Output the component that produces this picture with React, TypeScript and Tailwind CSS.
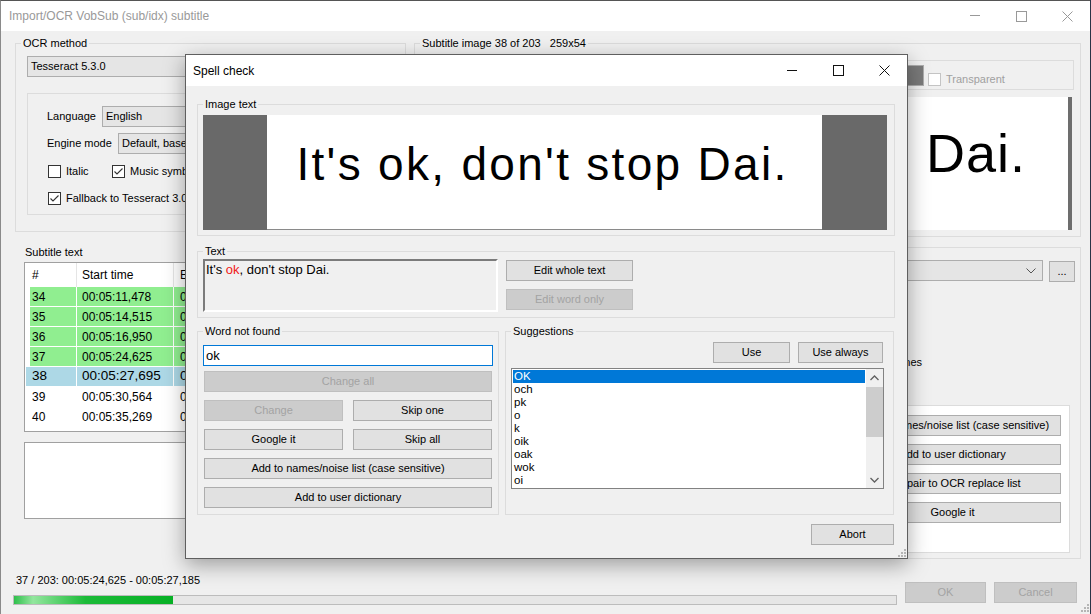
import React from "react";

const ui = "font-['Liberation_Sans',Arial,sans-serif]";

function WinControls({ color }: { color: string }) {
  return (
    <div className="ml-auto flex h-full">
      <div className="flex w-[46px] items-center justify-center">
        <svg width="10" height="10" viewBox="0 0 10 10">
          <path d="M0 4.5h10" stroke={color} strokeWidth="1" />
        </svg>
      </div>
      <div className="flex w-[46px] items-center justify-center">
        <svg width="11" height="11" viewBox="0 0 11 11">
          <rect x="0.5" y="0.5" width="10" height="10" fill="none" stroke={color} strokeWidth="1" />
        </svg>
      </div>
      <div className="flex w-[46px] items-center justify-center">
        <svg width="11" height="11" viewBox="0 0 11 11">
          <path d="M0.5 0.5L10.5 10.5M10.5 0.5L0.5 10.5" stroke={color} strokeWidth="1" />
        </svg>
      </div>
    </div>
  );
}

function Grip() {
  const dots = [
    [6, 0],
    [6, 3],
    [3, 3],
    [6, 6],
    [3, 6],
    [0, 6],
  ];
  return (
    <svg width="8" height="8" viewBox="0 0 8 8">
      {dots.map(([x, y], i) => (
        <rect key={i} x={x} y={y} width="2" height="2" fill="#b5b5b5" />
      ))}
    </svg>
  );
}

function Group({
  label,
  className = "",
  children,
}: {
  label?: string;
  className?: string;
  children?: React.ReactNode;
}) {
  return (
    <fieldset className={`shrink-0 border border-[#dcdcdc] ${className}`}>
      {label && (
        <legend className="ml-[5px] whitespace-pre px-[2px] text-[11px] leading-[13px]">
          {label}
        </legend>
      )}
      {children}
    </fieldset>
  );
}

function Btn({
  children,
  disabled,
  className = "",
}: {
  children: React.ReactNode;
  disabled?: boolean;
  className?: string;
}) {
  return (
    <div
      className={`flex h-[21px] shrink-0 items-center justify-center border text-[11px] ${
        disabled
          ? "border-[#bfbfbf] bg-[#cccccc] text-[#a3a3a3]"
          : "border-[#adadad] bg-[#e1e1e1] text-black"
      } ${className}`}
    >
      {children}
    </div>
  );
}

function Combo({ children, className = "" }: { children?: React.ReactNode; className?: string }) {
  return (
    <div
      className={`flex h-[21px] shrink-0 items-center overflow-hidden whitespace-nowrap border border-[#adadad] bg-[#e5e5e5] pl-[3px] text-[11px] ${className}`}
    >
      {children}
    </div>
  );
}

function Check({ checked, disabled }: { checked?: boolean; disabled?: boolean }) {
  return (
    <div
      className={`flex h-[13px] w-[13px] shrink-0 items-center justify-center border bg-white ${
        disabled ? "border-[#c4c4c4]" : "border-[#333333]"
      }`}
    >
      {checked && (
        <svg width="11" height="11" viewBox="0 0 11 11">
          <path d="M1.5 5.5L4 8L9.5 2.5" fill="none" stroke="#333" strokeWidth="1.1" />
        </svg>
      )}
    </div>
  );
}

function Chevron({ up }: { up?: boolean }) {
  return (
    <svg width="9" height="6" viewBox="0 0 9 6">
      <path
        d={up ? "M0.5 5L4.5 1L8.5 5" : "M0.5 1L4.5 5L8.5 1"}
        fill="none"
        stroke="#606060"
        strokeWidth="1.3"
      />
    </svg>
  );
}

const rows = [
  { n: "34", start: "00:05:11,478", end: "00:05:13,802", kind: "ok" },
  { n: "35", start: "00:05:14,515", end: "00:05:16,517", kind: "ok" },
  { n: "36", start: "00:05:16,950", end: "00:05:19,120", kind: "ok" },
  { n: "37", start: "00:05:24,625", end: "00:05:27,185", kind: "ok" },
  { n: "38", start: "00:05:27,695", end: "00:05:29,697", kind: "cur" },
  { n: "39", start: "00:05:30,564", end: "00:05:33,033", kind: "" },
  { n: "40", start: "00:05:35,269", end: "00:05:37,771", kind: "" },
];

// only the first columns are visible, the dialog sits over the rest
function SubtitleTable() {
  return (
    <div className="h-[170px] overflow-hidden border border-[#a0a0a0] bg-white text-[12px]">
      <div className="flex h-[24px] items-center">
        <div className="flex h-full w-[52px] shrink-0 items-center border-r border-[#e5e5e5] pl-[7px]">#</div>
        <div className="flex h-full w-[97px] shrink-0 items-center border-r border-[#e5e5e5] pl-[5px]">Start time</div>
        <div className="h-full min-w-0 flex-1 overflow-hidden pl-[6px] leading-[24px]">E</div>
      </div>
      {rows.map((r) => {
        const bg = r.kind === "ok" ? "bg-[#90ee90]" : r.kind === "cur" ? "bg-[#add8e6]" : "bg-white";
        const size = r.kind === "cur" ? "text-[13.5px]" : "text-[12px]";
        return (
          <div key={r.n} className={`flex h-[20px] border-b border-white ${size}`}>
            <div className={`h-full w-[52px] shrink-0 border-r border-white ${r.kind === "cur" ? "pl-[1px]" : "pl-[5px]"}`}>
              <div className={`flex h-full items-center ${bg} ${r.kind === "cur" ? "pl-[6px]" : "pl-[2px]"}`}>{r.n}</div>
            </div>
            <div className={`flex h-full w-[97px] shrink-0 items-center border-r border-white pl-[5px] ${bg}`}>{r.start}</div>
            <div className={`flex h-full min-w-0 flex-1 items-center overflow-hidden pl-[6px] ${bg}`}>{r.end.slice(0, 1)}</div>
          </div>
        );
      })}
    </div>
  );
}

function MainWindow() {
  return (
    <div className="flex h-[614px] w-[1090px] flex-col border-l border-t border-l-[#8a8a8a] border-t-[#555555] bg-[#f0f0f0]">
      {/* title bar */}
      <div className="flex h-[30px] shrink-0 items-center bg-white">
        <span className="pl-[8px] text-[12px] text-[#999999]">Import/OCR VobSub (sub/idx) subtitle</span>
        <WinControls color="#999999" />
      </div>

      <div className="relative flex flex-1 flex-col pt-[6px]">
        {/* top row */}
        <div className="flex h-[200px] shrink-0 pl-[14px]">
          <Group label="OCR method" className="h-[195px] w-[391px]">
            <Combo className="ml-[11px] mt-[6px] w-[367px]">Tesseract 5.3.0</Combo>
            <div className="ml-[11px] mt-[16px] h-[122px] w-[367px] border border-[#dcdcdc] leading-[13px]">
              <div className="mt-[12px] flex items-center pl-[19px]">
                <span className="w-[55px]">Language</span>
                <Combo className="w-[285px]">English</Combo>
              </div>
              <div className="mt-[6px] flex items-center pl-[19px]">
                <span className="w-[71px]">Engine mode</span>
                <Combo className="w-[260px]">Default, based on what is available</Combo>
              </div>
              <div className="mt-[11px] flex h-[13px] items-center pl-[20px]">
                <div className="flex w-[64px] items-center">
                  <Check />
                  <span className="ml-[5px]">Italic</span>
                </div>
                <Check checked />
                <span className="ml-[5px] whitespace-nowrap">Music symbols to ♪</span>
              </div>
              <div className="mt-[14px] flex h-[13px] items-center pl-[20px]">
                <Check checked />
                <span className="ml-[5px] whitespace-nowrap">Fallback to Tesseract 3.02</span>
              </div>
            </div>
          </Group>

          <Group label="Subtitle image 38 of 203   259x54" className="ml-[8px] h-[200px] w-[667px]">
            <div className="ml-[5px] mr-[6px] mt-[10px] flex h-[30px] items-center border border-[#dcdcdc] leading-[13px]">
              <div className="ml-[439px] h-[21px] w-[64px] border border-[#adadad] bg-[#7a7a7a]" />
              <div className="ml-[4px] mt-[8px]">
                <Check disabled />
              </div>
              <span className="ml-[5px] mt-[8px] text-[#a0a0a0]">Transparent</span>
            </div>
            <div className="ml-[5px] mr-[8px] mt-[7px] flex h-[133px]">
              <div className="flex flex-1 justify-end bg-white pr-[42px] pt-[29px]">
                <span className="whitespace-nowrap text-[54px] leading-[54px] tracking-[1px]">Dai.</span>
              </div>
              <div className="w-[4px] bg-[#6d6d6d]" />
            </div>
          </Group>
        </div>

        {/* middle row */}
        <div className="flex h-[322px] shrink-0">
          <div className="ml-[23px] flex w-[163px] flex-col">
            <div className="mt-[9px] pl-[1px] leading-[13px]">Subtitle text</div>
            <div className="mt-[3px]">
              <SubtitleTable />
            </div>
            <div className="mt-[10px] h-[77px] border border-[#a0a0a0] bg-white" />
          </div>

          <Group label="OCR - Auto correction / spellchecking" className="ml-auto mr-[9px] mt-[4px] h-[318px] w-[551px]">
            <div className="mt-[6px] flex pl-[14px] pr-[5px]">
              <Combo className="flex-1 justify-end pr-[6px]">
                <svg width="10" height="6" viewBox="0 0 10 6">
                  <path d="M0.5 0.5L5 5L9.5 0.5" fill="none" stroke="#555" strokeWidth="1" />
                </svg>
              </Combo>
              <Btn className="ml-[6px] mt-[1px] h-[18px] w-[26px]">...</Btn>
            </div>
            <div className="mt-[74px] pr-[158px] text-right leading-[13px]">lines</div>
            <div className="ml-auto mr-[10px] mt-[36px] flex h-[148px] w-[236px] flex-col items-end border border-[#dcdcdc] bg-white pr-[8px] pt-[9px]">
              <Btn className="w-[217px]">Add to names/noise list (case sensitive)</Btn>
              <Btn className="mt-[8px] w-[217px]">Add to user dictionary</Btn>
              <Btn className="mt-[8px] w-[217px]">Add pair to OCR replace list</Btn>
              <Btn className="mt-[8px] w-[217px]">Google it</Btn>
            </div>
          </Group>
        </div>

        {/* bottom row */}
        <div className="flex">
          <div className="ml-[12px] flex w-[884px] flex-col">
            <div className="mt-[15px] pl-[3px] leading-[13px]">37 / 203: 00:05:24,625 - 00:05:27,185</div>
            <div className="mt-[8px] h-[10px] w-[884px] border border-[#bcbcbc] bg-[#e6e6e6]">
              <div className="h-full w-[159px] bg-[linear-gradient(to_right,#2fc04c_0%,#93e69e_12%,#1bbb38_45%,#06b025_100%)]" />
            </div>
          </div>
          <Btn disabled className="ml-[8px] mt-[23px] w-[81px]">
            OK
          </Btn>
          <Btn disabled className="ml-[8px] mt-[23px] w-[83px]">
            Cancel
          </Btn>
        </div>

        <div className="absolute bottom-[2px] right-[1px]">
          <Grip />
        </div>
      </div>
    </div>
  );
}

function SpellCheckDialog() {
  const suggestions = ["OK", "och", "pk", "o", "k", "oik", "oak", "wok", "oi"];
  return (
    <div className="absolute left-[185px] top-[54px] flex h-[505px] w-[723px] flex-col border border-[#5f5f5f] bg-[#f0f0f0] shadow-[0_6px_20px_rgba(0,0,0,0.35)]">
      <div className="flex h-[31px] shrink-0 items-center bg-white">
        <span className="pl-[7px] text-[12px]">Spell check</span>
        <WinControls color="#111111" />
      </div>

      <div className="relative flex flex-1 flex-col pl-[11px]">
        <Group label="Image text" className="mt-[12px] h-[138px] w-[698px]">
          <div className="ml-[5px] mt-[4px] flex h-[115px] w-[684px]">
            <div className="w-[64px] bg-[#696969]" />
            <div className="flex flex-1 justify-center border-b border-[#8a8a8a] bg-white pr-[4px] pt-[26px]">
              <span className="whitespace-nowrap text-[46px] leading-[46px] tracking-[2.3px]">
                It's ok, don't stop Dai.
              </span>
            </div>
            <div className="w-[65px] bg-[#696969]" />
          </div>
        </Group>

        <Group label="Text" className="mt-[9px] h-[73px] w-[698px]">
          <div className="flex">
            <div className="ml-[5px] mt-[1px] h-[53px] w-[295px] border-2 border-b-white border-l-[#7b7b7b] border-r-white border-t-[#7b7b7b] pl-[1px] text-[13px] leading-[17px]">
              It's <span className="text-[#f01818]">ok</span>, don't stop Dai.
            </div>
            <div className="ml-[8px] mt-[2px] flex flex-col">
              <Btn className="w-[127px]">Edit whole text</Btn>
              <Btn disabled className="mt-[8px] w-[127px]">
                Edit word only
              </Btn>
            </div>
          </div>
        </Group>

        <div className="mt-[7px] flex gap-[6px]">
          <Group label="Word not found" className="h-[190px] w-[302px]">
            <div className="ml-[5px] mt-[7px] flex h-[21px] w-[290px] items-center border border-[#0078d7] bg-white pl-[2px] text-[13px]">
              ok
            </div>
            <Btn disabled className="ml-[6px] mt-[5px] w-[288px]">
              Change all
            </Btn>
            <div className="ml-[6px] mt-[8px] flex gap-[10px]">
              <Btn disabled className="w-[139px]">
                Change
              </Btn>
              <Btn className="w-[139px]">Skip one</Btn>
            </div>
            <div className="ml-[6px] mt-[8px] flex gap-[10px]">
              <Btn className="w-[139px]">Google it</Btn>
              <Btn className="w-[139px]">Skip all</Btn>
            </div>
            <Btn className="ml-[6px] mt-[8px] w-[288px]">Add to names/noise list (case sensitive)</Btn>
            <Btn className="ml-[6px] mt-[8px] w-[288px]">Add to user dictionary</Btn>
          </Group>

          <Group label="Suggestions" className="h-[190px] w-[389px]">
            <div className="mt-[4px] flex justify-end gap-[8px] pr-[10px]">
              <Btn className="w-[77px]">Use</Btn>
              <Btn className="w-[85px]">Use always</Btn>
            </div>
            <div className="ml-[5px] mt-[5px] flex h-[121px] w-[373px] border border-[#828282] bg-white">
              <div className="flex-1 px-[1px] pt-[1px] text-[11.5px]">
                {suggestions.map((s, i) => (
                  <div
                    key={s}
                    className={`h-[13px] pl-[1px] leading-[13px] ${i === 0 ? "bg-[#0078d7] text-white" : ""}`}
                  >
                    {s}
                  </div>
                ))}
              </div>
              <div className="flex w-[17px] flex-col bg-[#f0f0f0]">
                <div className="flex h-[17px] items-center justify-center">
                  <Chevron up />
                </div>
                <div className="mt-[1px] h-[50px] bg-[#cdcdcd]" />
                <div className="flex-1" />
                <div className="flex h-[17px] items-center justify-center">
                  <Chevron />
                </div>
              </div>
            </div>
          </Group>
        </div>

        <div className="mt-[9px] flex justify-end pr-[13px]">
          <Btn className="w-[83px]">Abort</Btn>
        </div>

        <div className="absolute bottom-[1px] right-[1px]">
          <Grip />
        </div>
      </div>
    </div>
  );
}

export default function App() {
  return (
    <div className={`relative h-[614px] w-[1091px] overflow-hidden bg-[#2a3446] text-[11px] text-black ${ui}`}>
      <MainWindow />
      <SpellCheckDialog />
    </div>
  );
}
